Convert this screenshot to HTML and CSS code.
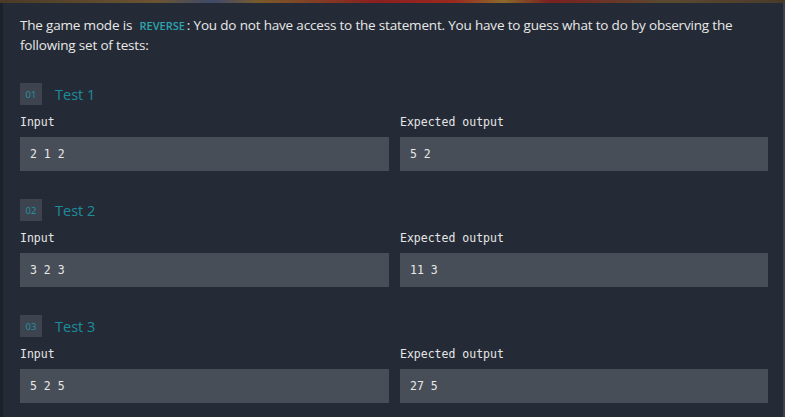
FILE: index.html
```html
<!DOCTYPE html>
<html>
<head>
<meta charset="utf-8">
<link rel="stylesheet" href="styles.css">
</head>
<body>
<div class="banner"></div>
<div class="panel">
  <p class="intro">The game mode is <span class="mode">REVERSE</span>: You do not have access to the statement. You have to guess what to do by observing the following set of tests:</p>

  <section class="test">
    <div class="test-head"><span class="badge">01</span><span class="title">Test 1</span></div>
    <div class="cols">
      <div class="col"><div class="label">Input</div><div class="box">2 1 2</div></div>
      <div class="col"><div class="label">Expected output</div><div class="box">5 2</div></div>
    </div>
  </section>

  <section class="test">
    <div class="test-head"><span class="badge">02</span><span class="title">Test 2</span></div>
    <div class="cols">
      <div class="col"><div class="label">Input</div><div class="box">3 2 3</div></div>
      <div class="col"><div class="label">Expected output</div><div class="box">11 3</div></div>
    </div>
  </section>

  <section class="test">
    <div class="test-head"><span class="badge">03</span><span class="title">Test 3</span></div>
    <div class="cols">
      <div class="col"><div class="label">Input</div><div class="box">5 2 5</div></div>
      <div class="col"><div class="label">Expected output</div><div class="box">27 5</div></div>
    </div>
  </section>
</div>
</body>
</html>
```

FILE: styles.css
```css
html, body {
  margin: 0;
  padding: 0;
  background: #252b36;
  height: 100%;
  overflow: hidden;
}
.banner {
  height: 3px;
  background: linear-gradient(90deg, #4a3a26 0%, #6b5431 20%, #3d4a6a 27%, #7a5a2a 33%, #8a1f1f 48%, #9a2a1e 58%, #8a6a2a 64%, #7a2020 70%, #5a4a30 85%, #4a3a2a 100%);
}
.panel {
  border-left: 3px solid #1c2029;
  border-right: 2px solid #3b414b;
  padding: 13px 15px 0 17px;
  height: 414px;
  box-sizing: border-box;
  font-family: "Open Sans", sans-serif;
  color: #e8e8e8;
}
.intro {
  margin: 0;
  font-size: 13.5px;
  line-height: 19.5px;
  letter-spacing: -0.18px;
}
.mode {
  color: #2da3ad;
  font-size: 11px;
  font-weight: 600;
  letter-spacing: 0;
  margin: 0 2px 0 4px;
}
.test {
  margin-top: 28px;
}
.test + .test {
  margin-top: 28px;
}
.test-head {
  display: flex;
  align-items: center;
  height: 22px;
}
.badge {
  width: 22px;
  height: 22px;
  background: #3d444f;
  color: #2394a3;
  font-size: 9.5px;
  display: flex;
  align-items: center;
  justify-content: center;
}
.title {
  margin-left: 13px;
  color: #1b8d9c;
  font-size: 14.5px;
  line-height: 22px;
  padding-top: 1px;
}
.cols {
  display: grid;
  grid-template-columns: 369px 368px;
  column-gap: 11px;
  margin-top: 10px;
}
.label {
  font-family: "DejaVu Sans Mono", monospace;
  font-size: 11.5px;
  line-height: 14px;
  color: #e6e6e6;
  margin-bottom: 8px;
}
.box {
  background: #474e58;
  height: 34px;
  display: flex;
  align-items: center;
  padding-left: 10px;
  font-family: "DejaVu Sans Mono", monospace;
  font-size: 11.5px;
  color: #e8e8e8;
}
```
